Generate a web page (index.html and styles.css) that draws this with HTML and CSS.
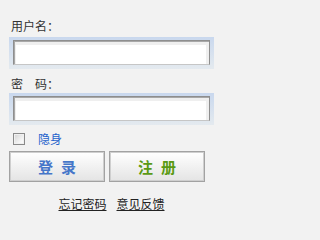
FILE: index.html
```html
<!DOCTYPE html>
<html>
<head>
<meta charset="utf-8">
<link rel="stylesheet" href="styles.css">
</head>
<body>
<div class="login">
  <div class="label">用户名：</div>
  <div class="glow"><input class="field" type="text"></div>
  <div class="label label-pw">密　码：</div>
  <div class="glow"><input class="field" type="password"></div>
  <label class="remember"><span class="check"></span><span class="remember-text">隐身</span></label>
  <div class="buttons">
    <button class="btn btn-login"><span>登</span><span>录</span></button>
    <button class="btn btn-reg"><span>注</span><span>册</span></button>
  </div>
  <div class="links">
    <a href="#">忘记密码</a>
    <a href="#">意见反馈</a>
  </div>
</div>
</body>
</html>
```
FILE: styles.css
```css
html, body {
  margin: 0;
  padding: 0;
  background: #f2f2f2;
}
body {
  font-family: "Noto Sans CJK SC", "Noto Sans", sans-serif;
  font-size: 12px;
  color: #333;
}
.login {
  width: 205px;
  padding: 18px 0 0 9px;
}
.label {
  height: 16px;
  line-height: 16px;
  padding-left: 2px;
  margin-bottom: 3px;
}
.label-pw {
  margin-top: 7px;
  margin-bottom: 1px;
}
.glow {
  height: 32px;
  box-sizing: border-box;
  padding: 3px 4px 4px 4px;
  background: linear-gradient(#c9d8ee, #e4eaef);
}
.field {
  display: block;
  width: 197px;
  height: 25px;
  box-sizing: border-box;
  margin: 0;
  padding: 0 4px;
  border: 1px solid #8e8e8e;
  border-bottom-color: #c6c6c6;
  box-shadow: inset 1px 1px 0 #a8a8a8, inset 0 4px 0 #efefef, inset 2px 0 0 #efefef, inset -3px 0 0 #efefef;
  background: #fff;
  outline: none;
  font-family: inherit;
  font-size: 12px;
}
.remember {
  display: flex;
  align-items: center;
  height: 14px;
  margin-top: 7px;
  padding-left: 4px;
}
.check {
  width: 12px;
  height: 12px;
  box-sizing: border-box;
  border: 1px solid #8a8a8a;
  background: linear-gradient(135deg, #d2d2d2, #f6f6f6 70%, #ffffff);
  box-shadow: inset 0 0 0 1px #f0f0f0;
}
.remember-text {
  margin-left: 13px;
  color: #1f62cc;
  font-size: 12px;
  line-height: 14px;
}
.buttons {
  display: flex;
  gap: 4px;
  margin-top: 5px;
}
.btn {
  width: 96px;
  height: 31px;
  box-sizing: border-box;
  margin: 0;
  padding: 0;
  border: 1px solid #a2a2a2;
  box-shadow: inset 0 0 0 1px #cfcfcf;
  background: linear-gradient(#ffffff, #e4e4e4);
  display: flex;
  align-items: center;
  justify-content: center;
  gap: 8px;
  font-family: inherit;
  font-size: 15px;
  font-weight: bold;
}
.btn-login {
  color: #4576c9;
}
.btn-reg {
  color: #5a9a14;
}
.links {
  display: flex;
  justify-content: center;
  gap: 10px;
  margin-top: 15px;
}
.links a {
  color: #222;
  text-decoration: underline;
  font-size: 12px;
  line-height: 14px;
}
```
